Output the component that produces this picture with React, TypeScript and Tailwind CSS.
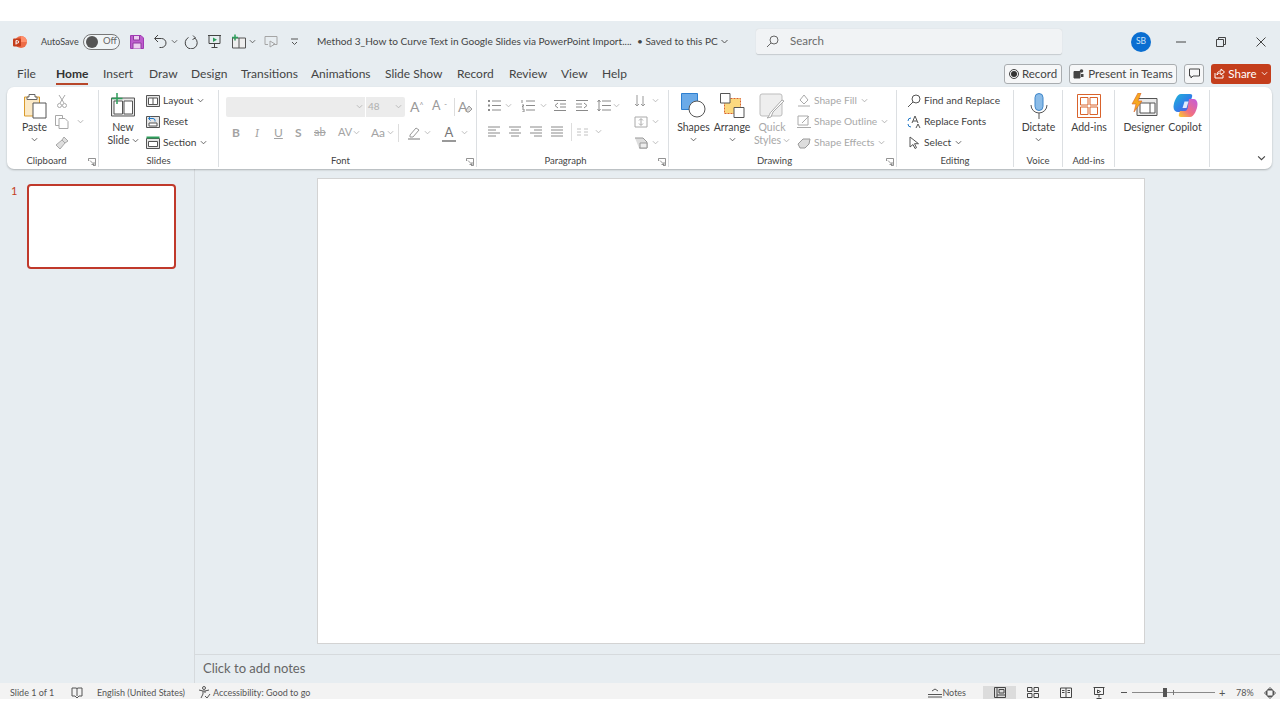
import type { ReactNode } from "react"

const FONT = "[font-family:Lato,'Noto_Sans',sans-serif]"

function Chev({ className = "", color = "#555" }: { className?: string; color?: string }) {
  return (
    <svg viewBox="0 0 8 5" className={`w-[7px] h-[5px] shrink-0 ${className}`} fill="none" stroke={color} strokeWidth="1">
      <path d="M1 1l3 3 3-3" />
    </svg>
  )
}

function Ico({ w = 16, h = 16, children, className = "" }: { w?: number; h?: number; children: ReactNode; className?: string }) {
  return (
    <svg width={w} height={h} viewBox={`0 0 ${w} ${h}`} fill="none" stroke="#555" strokeWidth="1" className={`shrink-0 ${className}`}>
      {children}
    </svg>
  )
}

const TABS = [
  { label: "File", w: "w-[39px]" },
  { label: "Home", w: "w-[47px]" },
  { label: "Insert", w: "w-[46px]" },
  { label: "Draw", w: "w-[42px]" },
  { label: "Design", w: "w-[50px]" },
  { label: "Transitions", w: "w-[70px]" },
  { label: "Animations", w: "w-[74px]" },
  { label: "Slide Show", w: "w-[72px]" },
  { label: "Record", w: "w-[52px]" },
  { label: "Review", w: "w-[52px]" },
  { label: "View", w: "w-[41px]" },
  { label: "Help", w: "w-[40px]" },
]

function Group({ label, className, contentClass = "", labelClass = "", launcher, children }: { label?: string; className: string; contentClass?: string; labelClass?: string; launcher?: boolean; children: ReactNode }) {
  return (
    <div className={`relative h-[77px] shrink-0 flex flex-col border-r border-[#dcdfe2] ${className}`}>
      <div className={`flex-1 min-h-0 flex ${contentClass}`}>{children}</div>
      <div className={`h-[12px] text-center text-[9.5px] leading-[12px] text-[#444] ${labelClass}`}>{label}</div>
      {launcher && (
        <svg viewBox="0 0 8 8" className="absolute right-[2px] bottom-[1px] w-[8px] h-[8px]" fill="none" stroke="#777" strokeWidth="0.8">
          <path d="M.5 3V.5H7.5V7.5H5M2 2.5l4 4M6 4v2.5H3.5" />
        </svg>
      )}
    </div>
  )
}

function SmallRow({ icon, label, chevron, muted }: { icon: ReactNode; label: string; chevron?: boolean; muted?: boolean }) {
  return (
    <div className={`h-[21px] flex items-center gap-[3px] text-[10.2px] whitespace-nowrap ${muted ? "text-[#a8a8a8]" : "text-[#3f3f3f]"}`}>
      <span className="w-[14px] h-[16px] flex items-center justify-center">{icon}</span>
      <span>{label}</span>
      {chevron && <Chev className="ml-[1px]" color={muted ? "#aaa" : "#555"} />}
    </div>
  )
}

function BigButton({ icon, lines, chevronBelow, width, muted }: { icon: ReactNode; lines: ReactNode; chevronBelow?: boolean; width: string; muted?: boolean }) {
  return (
    <div className={`${width} shrink-0 pt-[2px] flex flex-col items-center text-[10.5px] leading-[13px] ${muted ? "text-[#a8a8a8]" : "text-[#3f3f3f]"}`}>
      <div className="h-[27px] flex items-center justify-center">{icon}</div>
      <div className="mt-[2px] text-center whitespace-nowrap">{lines}</div>
      {chevronBelow && <Chev className="mt-[3px]" />}
    </div>
  )
}

function Lines({ kind }: { kind: "left" | "center" | "right" | "justify" }) {
  const rows: Record<string, string> = {
    left: "M1 2h12M1 5h8M1 8h12M1 11h8",
    center: "M1 2h12M3 5h8M1 8h12M3 11h8",
    right: "M1 2h12M5 5h8M1 8h12M5 11h8",
    justify: "M1 2h12M1 5h12M1 8h12M1 11h12",
  }
  return (
    <Ico w={14} h={13}>
      <path d={rows[kind]} stroke="#8a8a8a" />
    </Ico>
  )
}

function Copilot() {
  return (
    <svg width="25" height="25" viewBox="0 0 25 25">
      <defs>
        <linearGradient id="cpA" x1="0" y1="0" x2="1" y2="1">
          <stop offset="0" stopColor="#1fb6d8" />
          <stop offset="0.55" stopColor="#2f7fe8" />
          <stop offset="1" stopColor="#7a4fd8" />
        </linearGradient>
        <linearGradient id="cpB" x1="0" y1="1" x2="1" y2="0">
          <stop offset="0" stopColor="#f9d02c" />
          <stop offset="0.4" stopColor="#f2707f" />
          <stop offset="1" stopColor="#c25be0" />
        </linearGradient>
      </defs>
      <path d="M8 1h9c2 0 2.600 1 2 3l-4 12c-.8 2.200-1.800 3-4 3H5C2.600 19 .5 17.200 .5 14c0-5 3.500-13 7.500-13z" fill="url(#cpA)" />
      <path d="M16 6h4.500c2.400 0 4 2 4 5 0 5-3.500 13-7.500 13H8c-2 0-2.600-1-2-3l1-3h4c2 0 3-.8 3.600-2.600z" fill="url(#cpB)" />
      <path d="M11.500 8.500h4l-2 6.500h-4z" fill="#fff" opacity="0.85" />
    </svg>
  )
}

export default function App() {
  return (
    <div className={`h-[720px] w-[1280px] overflow-hidden bg-white pt-[21px] ${FONT}`}>
      <div className="h-[678px] bg-[#e7edf1] flex flex-col">
        {/* title bar */}
        <div className="h-[41px] shrink-0 flex items-center pl-[13px] text-[#444] text-[10.1px] whitespace-nowrap">
          <svg width="14" height="14" viewBox="0 0 14 14" className="shrink-0">
            <circle cx="8" cy="7" r="6" fill="#ed6c47" />
            <path d="M8 1a6 6 0 0 1 6 6H8z" fill="#ff8f6b" />
            <rect x="0" y="3.5" width="8" height="8" rx="1" fill="#c43e1c" />
            <path d="M3 5.500v4M3 5.700h1.500a1.200 1.200 0 0 1 0 2.400H3" stroke="#fff" strokeWidth="1" fill="none" />
          </svg>
          <span className="ml-[14px] w-[42px] text-[9px]">AutoSave</span>
          <div className="w-[37px] h-[16px] rounded-full border border-[#777] bg-white/40 flex items-center pl-[2px] gap-[5px]">
            <span className="w-[12px] h-[12px] rounded-full bg-[#555]" />
            <span className="text-[9.5px] text-[#666]">Off</span>
          </div>
          <Ico w={14} h={14} className="ml-[10px]">
            <path d="M.5.5h10.500l2.500 2.500v10.500H.5z" fill="#bd5ccd" stroke="#a03bb3" />
            <path d="M3.500 1v4h6V1M3 13.500V8h8v5.500" fill="#eccdf0" stroke="#8c3a9c" />
          </Ico>
          <Ico w={15} h={15} className="ml-[9px]">
            <path d="M5 1L1.500 4.500 5 8M2 4.500h6.500a4.500 4.500 0 0 1 0 9H6.500" stroke="#444" />
          </Ico>
          <Chev className="ml-[3px]" />
          <Ico w={15} h={15} className="ml-[6px]">
            <path d="M9 1.500l2.500 2.500-3 1.500M11 4.200a6 6 0 1 1-6.500-.7" stroke="#444" />
          </Ico>
          <Ico w={15} h={15} className="ml-[8px]">
            <path d="M1 1.500h13M2 1.500v8h11v-8M7.500 9.500V13M4.500 13.500h6" stroke="#444" />
            <path d="M6 3.500l4 2.200L6 8z" fill="#2e9e5b" stroke="none" />
          </Ico>
          <Ico w={16} h={15} className="ml-[9px]">
            <path d="M1.500 4h13v10h-13zM8 4v10" stroke="#555" fill="#eee" />
            <path d="M4 .5v6M1 3.500h6" stroke="#2e9e5b" strokeWidth="1.500" />
          </Ico>
          <Chev className="ml-[2px]" />
          <Ico w={14} h={14} className="ml-[8px]">
            <path d="M1 1.500h12v8H9M1 1.500v8h3M6 6l5 3-5 3z" stroke="#a5a5a5" />
          </Ico>
          <svg width="9" height="8" viewBox="0 0 9 8" className="ml-[12px] shrink-0" fill="none" stroke="#555">
            <path d="M1 1h7M2 4l2.500 2.500L7 4" />
          </svg>
          <span className="ml-[18px] w-[320px]">Method 3_How to Curve Text in Google Slides via PowerPoint Import....</span>
          <span className="w-[83px]">• Saved to this PC</span>
          <Chev className="w-[9px]" />
          <div className="ml-[27px] w-[306px] h-[26px] rounded-[3px] bg-[#f1f3f5] border-b border-[#c9ced2] shadow-[0_0_1px_#c5c9cc] flex items-center pl-[10px] gap-[11px] text-[#6b6b6b] text-[11.5px]">
            <Ico w={13} h={13}>
              <circle cx="8" cy="5" r="4" stroke="#666" />
              <path d="M5 8l-4 4" stroke="#666" />
            </Ico>
            <span>Search</span>
          </div>
          <div className="ml-[69px] w-[20px] h-[20px] rounded-full bg-[#0a6ed1] text-[#cfe4f7] text-[8.5px] flex items-center justify-center">SB</div>
          <Ico w={10} h={10} className="ml-[25px]">
            <path d="M0 5h10" stroke="#444" />
          </Ico>
          <Ico w={10} h={10} className="ml-[30px]">
            <path d="M.5 2.500h7v7h-7zM2.500 2.500V.5h7v7H7.500" stroke="#444" />
          </Ico>
          <Ico w={10} h={10} className="ml-[30px]">
            <path d="M.5.5l9 9M9.500.5l-9 9" stroke="#444" />
          </Ico>
        </div>

        {/* tabs */}
        <div className="h-[25px] shrink-0 flex items-center pl-[17px] pr-[9px] pb-[2px] text-[12px] text-[#444]">
          {TABS.map((t) => (
            <div key={t.label} className={`${t.w} h-full flex items-center`}>
              {t.label === "Home" ? (
                <span className="relative font-bold text-[#333]">
                  {t.label}
                  <span className="absolute left-0 right-0 -bottom-[2px] h-[2px] bg-[#b7472a]" />
                </span>
              ) : (
                t.label
              )}
            </div>
          ))}
          <div className="ml-auto flex items-center gap-[7px] text-[11.5px]">
            <div className="h-[20px] w-[58px] rounded-[3px] border border-[#a9adb0] bg-[#f6f7f8] flex items-center justify-center gap-[3px]">
              <span className="w-[10px] h-[10px] rounded-full border border-[#444] flex items-center justify-center">
                <span className="w-[6px] h-[6px] rounded-full bg-[#333]" />
              </span>
              Record
            </div>
            <div className="h-[20px] w-[108px] rounded-[3px] border border-[#a9adb0] bg-[#f6f7f8] flex items-center justify-center gap-[4px] whitespace-nowrap">
              <Ico w={11} h={11}>
                <path d="M1 3.500h6v6.500H1z" fill="#444" stroke="#444" />
                <circle cx="8.5" cy="3" r="1.8" fill="#444" stroke="none" />
                <path d="M8 6h2.500v3H8z" fill="#444" stroke="none" />
              </Ico>
              Present in Teams
            </div>
            <div className="h-[20px] w-[20px] rounded-[3px] border border-[#a9adb0] bg-[#f6f7f8] flex items-center justify-center">
              <Ico w={11} h={11}>
                <path d="M.5 1h10v7H4L2 10V8H.5z" stroke="#444" />
              </Ico>
            </div>
            <div className="h-[20px] w-[60px] rounded-[3px] bg-[#c43e1c] text-white flex items-center justify-center gap-[3px]">
              <Ico w={11} h={11}>
                <path d="M1 5v5h8V7M3 7c0-3 2-4 4-4V1l3.500 3L7 7V5C5 5 4 5.500 3 7z" stroke="#fff" />
              </Ico>
              Share
              <Chev color="#fff" className="ml-[1px]" />
            </div>
          </div>
        </div>

        {/* ribbon */}
        <div className="h-[82px] mr-[8px] ml-[7px] shrink-0 rounded-[7px] bg-white shadow-[0_1px_2px_rgba(0,0,0,0.25)] flex pt-[3px] relative">
          <Group label="Clipboard" launcher className="w-[92px]" contentClass="pl-[13px]" labelClass="pr-[12px]">
            <BigButton
              width="w-[29px]"
              chevronBelow
              lines="Paste"
              icon={
                <Ico w={24} h={26}>
                  <path d="M1.500 4h15v19h-15z" fill="#fbe9c6" stroke="#d99a2b" />
                  <path d="M6 4V1.500h6V4h2v2.500H4V4z" fill="#fff" stroke="#666" />
                  <path d="M10 10h13v15H10z" fill="#fff" stroke="#555" />
                </Ico>
              }
            />
            <div className="ml-[4px] flex flex-col">
              <div className="h-[21px] flex items-center pl-[4px]">
                <Ico w={10} h={14}>
                  <path d="M2 1l5 8M8 1L3 9" stroke="#a8a8a8" />
                  <circle cx="2.5" cy="11.500" r="2" stroke="#a8a8a8" />
                  <circle cx="7.5" cy="11.500" r="2" stroke="#a8a8a8" />
                </Ico>
              </div>
              <div className="h-[21px] flex items-center gap-[8px] pl-[2px]">
                <Ico w={14} h={14}>
                  <path d="M.5.5h7v10h-7z" stroke="#a8a8a8" />
                  <path d="M4 3.500h6l3 3v7H4z" fill="#fff" stroke="#a8a8a8" />
                </Ico>
                <Chev color="#aaa" />
              </div>
              <div className="h-[21px] flex items-center pl-[2px]">
                <Ico w={14} h={14}>
                  <path d="M9 1l4 4-3 2-3-3zM7 4L1 9l4 4 5-6" stroke="#a8a8a8" fill="#dedede" />
                </Ico>
              </div>
            </div>
          </Group>

          <Group label="Slides" className="w-[120px]" contentClass="pl-[8px]">
            <BigButton
              width="w-[32px]"
              lines={
                <>
                  New
                  <br />
                  <span className="inline-flex items-center gap-[2px]">
                    Slide <Chev />
                  </span>
                </>
              }
              icon={
                <Ico w={26} h={25}>
                  <path d="M1.500 5h23v18h-23z" fill="#e9e9e9" stroke="#555" />
                  <path d="M4 8h8.500v13H4zM14 8h8.500v13H14z" fill="#fff" stroke="#555" />
                  <path d="M7 0v11M1.500 5.500h11" stroke="#2e9e5b" strokeWidth="1.500" />
                </Ico>
              }
            />
            <div className="ml-[7px] flex flex-col">
              <SmallRow
                chevron
                label="Layout"
                icon={
                  <Ico w={14} h={12}>
                    <path d="M.5.5h13v11H.5z" fill="#e6e6e6" stroke="#555" />
                    <path d="M2.500 3h9v6.500h-9zM7 3v6.500" fill="#fff" stroke="#555" />
                  </Ico>
                }
              />
              <SmallRow
                label="Reset"
                icon={
                  <Ico w={14} h={13}>
                    <path d="M.5 1.500h13v11H.5z" fill="#e6e6e6" stroke="#555" />
                    <path d="M3 8h8v3H3z" fill="#fff" stroke="#555" />
                    <path d="M3 3.500h4a2 2 0 0 1 2 2v1M4.500 1.500l-2 2 2 2" stroke="#1f78c8" />
                  </Ico>
                }
              />
              <SmallRow
                chevron
                label="Section"
                icon={
                  <Ico w={14} h={13}>
                    <path d="M.5 2.500h13v10H.5z" fill="#e6e6e6" stroke="#555" />
                    <path d="M2.500 5.500h9v5h-9z" fill="#fff" stroke="#555" />
                    <path d="M.5 1.500h13" stroke="#2e9e5b" strokeWidth="2" />
                  </Ico>
                }
              />
            </div>
          </Group>

          <Group label="Font" launcher className="w-[258px]" contentClass="pl-[7px]" labelClass="pr-[14px]">
            <div className="flex flex-col">
              <div className="h-[21px] mt-[6px] flex items-center">
                <div className="w-[139px] h-[20px] rounded-l-[2px] bg-[#ececec] flex items-center justify-end pr-[2px]">
                  <Chev color="#b5b5b5" />
                </div>
                <div className="ml-[1px] w-[39px] h-[20px] rounded-r-[2px] bg-[#ececec] flex items-center pl-[2px] text-[10px] text-[#b0b0b0]">
                  48
                  <Chev className="ml-auto mr-[3px]" color="#b5b5b5" />
                </div>
                <span className="ml-[5px] w-[22px] text-[14px] leading-none text-[#999]">
                  A<sup className="text-[7px]">^</sup>
                </span>
                <span className="w-[12px] text-[12.5px] leading-none text-[#999]">A</span>
                <span className="w-[10px] text-[8px] text-[#999]">ˇ</span>
                <span className="w-[1px] h-[18px] bg-[#ddd]" />
                <span className="ml-[3px] text-[14px] leading-none text-[#999]">A</span>
                <Ico w={8} h={8} className="-ml-[2px] mt-[4px]">
                  <path d="M1 5l3-4 3 3-3 3H2z" fill="#ddd" stroke="#999" />
                </Ico>
              </div>
              <div className="h-[23px] mt-[4px] flex items-center text-[12px] text-[#a3a3a3]">
                <span className="ml-[6px] w-[21px] font-bold">B</span>
                <span className="w-[21px] pl-[2px] italic font-serif">I</span>
                <span className="w-[21px] underline">U</span>
                <span className="w-[19px] font-bold">S</span>
                <span className="w-[24px] line-through text-[11px]">ab</span>
                <span className="w-[15px] text-[11px]">AV</span>
                <Chev className="mr-[11px]" color="#b5b5b5" />
                <span className="w-[16px] text-[12px]">Aa</span>
                <Chev className="mr-[4px]" color="#b5b5b5" />
                <span className="w-[1px] h-[18px] bg-[#ddd] mr-[8px]" />
                <Ico w={14} h={14}>
                  <path d="M3 9l6-7 3 2-6 7H3z" stroke="#999" />
                  <path d="M1 13h12" stroke="#bbb" strokeWidth="2" />
                </Ico>
                <Chev className="ml-[3px] mr-[11px]" color="#b5b5b5" />
                <span className="relative w-[14px] text-center text-[13px] leading-none text-[#777]">
                  A
                  <span className="absolute left-0 right-0 -bottom-[3px] h-[2px] bg-[#999]" />
                </span>
                <Chev className="ml-[5px]" color="#b5b5b5" />
              </div>
            </div>
          </Group>

          <Group label="Paragraph" launcher className="w-[192px]" contentClass="pl-[10px]" labelClass="pr-[14px]">
            <div className="w-[147px] flex flex-col">
              <div className="h-[21px] mt-[5px] flex items-center">
                <Ico w={14} h={13}>
                  <path d="M5 2h9M5 6.500h9M5 11h9" stroke="#8a8a8a" />
                  <path d="M1 2h2M1 6.500h2M1 11h2" stroke="#8a8a8a" strokeWidth="2" />
                </Ico>
                <Chev className="ml-[4px] mr-[9px]" color="#b5b5b5" />
                <Ico w={14} h={13}>
                  <path d="M5 2h9M5 6.500h9M5 11h9M1 1v3M1 6h2l-2 2h2M1 10h2v3H1" stroke="#8a8a8a" />
                </Ico>
                <Chev className="ml-[5px] mr-[6px]" color="#b5b5b5" />
                <Ico w={14} h={13} className="mr-[8px]">
                  <path d="M1 1.500h12M7 5h6M7 8h6M1 11.500h12M5 4L2 6.500 5 9" stroke="#8a8a8a" />
                </Ico>
                <Ico w={14} h={13} className="mr-[8px]">
                  <path d="M1 1.500h12M1 5h6M1 8h6M1 11.500h12M9 4l3 2.500L9 9" stroke="#8a8a8a" />
                </Ico>
                <Ico w={14} h={13}>
                  <path d="M5 2h9M5 6.500h9M5 11h9M2 1v11M.5 3L2 1l1.500 2M.5 10L2 12l1.500-2" stroke="#8a8a8a" />
                </Ico>
                <Chev className="ml-[2px]" color="#b5b5b5" />
              </div>
              <div className="h-[23px] mt-[4px] flex items-center gap-[7px]">
                <Lines kind="left" />
                <Lines kind="center" />
                <Lines kind="right" />
                <Lines kind="justify" />
                <span className="w-[1px] h-[18px] bg-[#ddd]" />
                <Ico w={13} h={10} className="-ml-[3px]">
                  <path d="M1 2h4M8 2h4M1 5h4M8 5h4M1 8h4M8 8h4" stroke="#c2c2c2" />
                </Ico>
                <Chev className="-ml-[1px]" color="#b5b5b5" />
              </div>
            </div>
            <div className="flex flex-col">
              <div className="h-[21px] flex items-center gap-[4px]">
                <Ico w={14} h={14}>
                  <path d="M3 1v11M1 10l2 2 2-2M7 10l2 2 2-2M9 2v10" stroke="#999" />
                </Ico>
                <Chev color="#b5b5b5" />
              </div>
              <div className="h-[21px] flex items-center gap-[4px]">
                <Ico w={14} h={14}>
                  <path d="M1 2h12v10H1zM7 4v6M5 5.500l2-2 2 2M5 8.500l2 2 2-2" stroke="#aaa" />
                </Ico>
                <Chev color="#b5b5b5" />
              </div>
              <div className="h-[21px] flex items-center gap-[4px]">
                <Ico w={14} h={14}>
                  <path d="M1 2h8l4 4v6H5" fill="#ddd" stroke="#999" />
                  <path d="M6 7h7v5H6z" fill="#eee" stroke="#999" />
                </Ico>
                <Chev color="#b5b5b5" />
              </div>
            </div>
          </Group>

          <Group label="Drawing" launcher className="w-[228px]" contentClass="pl-[6px]" labelClass="pr-[16px]">
            <BigButton
              width="w-[37px]"
              chevronBelow
              lines="Shapes"
              icon={
                <Ico w={26} h={25}>
                  <path d="M.5.5h16v16h-16z" fill="#6aaae8" stroke="#2d7fd0" />
                  <circle cx="16" cy="16" r="8" fill="#fff" stroke="#555" />
                </Ico>
              }
            />
            <BigButton
              width="w-[40px]"
              chevronBelow
              lines="Arrange"
              icon={
                <Ico w={25} h={25}>
                  <path d="M4.500 5.500h16v15h-16z" fill="#fbd97f" stroke="#d9622b" strokeDasharray="2 1" />
                  <path d="M.5.5h9.500v9.500H.5zM14 14.500h10v10H14z" fill="#fff" stroke="#555" />
                </Ico>
              }
            />
            <BigButton
              width="w-[40px]"
              muted
              lines={
                <>
                  Quick
                  <br />
                  <span className="inline-flex items-center gap-[2px]">
                    Styles <Chev color="#aaa" />
                  </span>
                </>
              }
              icon={
                <Ico w={26} h={26}>
                  <rect x="1" y="1" width="22" height="22" rx="2" fill="#eee" stroke="#bdbdbd" />
                  <path d="M25 8L14 19l-2 5-4 1c3-2 2-5 5-7L23 7z" fill="#fff" stroke="#aaa" />
                </Ico>
              }
            />
            <div className="ml-[5px] flex flex-col">
              <SmallRow
                muted
                chevron
                label="Shape Fill"
                icon={
                  <Ico w={14} h={14}>
                    <path d="M7 1l4 5-4 4-4-4zM1 12h12" stroke="#aaa" />
                  </Ico>
                }
              />
              <SmallRow
                muted
                chevron
                label="Shape Outline"
                icon={
                  <Ico w={14} h={14}>
                    <path d="M1 1h10v9H1zM5 8l7-7M0 12.500h14" stroke="#aaa" />
                  </Ico>
                }
              />
              <SmallRow
                muted
                chevron
                label="Shape Effects"
                icon={
                  <Ico w={14} h={14}>
                    <path d="M1 8l5-5h7l-1 5-4 4H3z" fill="#ddd" stroke="#999" />
                  </Ico>
                }
              />
            </div>
          </Group>

          <Group label="Editing" className="w-[117px]" contentClass="pl-[10px]">
            <div className="flex flex-col">
              <SmallRow
                label="Find and Replace"
                icon={
                  <Ico w={14} h={14}>
                    <circle cx="9" cy="5" r="4" stroke="#555" />
                    <path d="M6 8l-5 5" stroke="#555" />
                  </Ico>
                }
              />
              <SmallRow
                label="Replace Fonts"
                icon={
                  <Ico w={14} h={14}>
                    <path d="M5 8l3-7 3 7M6 6h4M9 13l2-4 2 4" stroke="#555" />
                    <path d="M1 6a3 3 0 0 1 3-3M4 12a3 3 0 0 1-3-3" stroke="#1f78c8" />
                  </Ico>
                }
              />
              <SmallRow
                chevron
                label="Select"
                icon={
                  <Ico w={12} h={14}>
                    <path d="M2 1v10l3-2.500 2 4 1.500-.8-2-4h4z" stroke="#555" fill="#fff" />
                  </Ico>
                }
              />
            </div>
          </Group>

          <Group label="Voice" className="w-[49px]" contentClass="pl-[1px]">
            <BigButton
              width="w-full"
              chevronBelow
              lines="Dictate"
              icon={
                <Ico w={18} h={26}>
                  <rect x="5" y="0.5" width="8" height="17" rx="4" fill="#8bbce8" stroke="#3f86c9" />
                  <path d="M1 12a8 8 0 0 0 16 0M9 20v6" stroke="#555" />
                </Ico>
              }
            />
          </Group>

          <Group label="Add-ins" className="w-[52px]" contentClass="pl-[1px]">
            <BigButton
              width="w-full"
              lines="Add-ins"
              icon={
                <Ico w={24} h={24}>
                  <path d="M.5.5h23v23H.5z" stroke="#d9622b" />
                  <path d="M3.500 3.500h7.500v7.500H3.500zM13 3.500h7.500v7.500H13zM3.500 13H11v7.500H3.500zM13 13h7.500v7.500H13z" stroke="#d9622b" />
                </Ico>
              }
            />
          </Group>

          <Group className="w-[95px]" contentClass="pl-[8px]">
            <BigButton
              width="w-[42px]"
              lines="Designer"
              icon={
                <Ico w={27} h={25}>
                  <path d="M6 5.500h20v17H6z" fill="#e9e9e9" stroke="#555" />
                  <path d="M9 10h15v10H9zM19 10v10" fill="#fff" stroke="#555" />
                  <path d="M7 0L1 11h4l-2 8 8-11H7l3-8z" fill="#f6a821" stroke="#d9622b" strokeWidth="0.6" />
                </Ico>
              }
            />
            <BigButton width="w-[40px]" lines="Copilot" icon={<Copilot />} />
          </Group>

          <Chev className="absolute right-[6px] bottom-[8px] w-[9px] h-[6px]" color="#444" />
        </div>

        {/* main */}
        <div className="flex-1 min-h-0 flex">
          <div className="w-[195px] shrink-0 border-r border-[#d6dadd] flex pl-[11px] pt-[15px]">
            <span className="w-[16px] text-[11px] leading-[14px] text-[#c43e1c]">1</span>
            <div className="w-[149px] h-[85px] rounded-[4px] border-2 border-[#c0392b] bg-white" />
          </div>
          <div className="flex-1 flex flex-col min-w-0">
            <div className="h-[486px] border-b border-[#d6dadd] flex items-start justify-center pt-[9px] pr-[13px]">
              <div className="w-[828px] h-[466px] bg-white border border-[#d3d3d3]" />
            </div>
            <div className="flex-1 flex items-center pl-[8px] text-[13px] text-[#666]">Click to add notes</div>
          </div>
        </div>

        {/* status bar */}
        <div className="h-[16px] shrink-0 bg-[#f3f3f3] flex items-center pl-[10px] pt-[3px] text-[9px] text-[#555] whitespace-nowrap">
          <span className="w-[61px]">Slide 1 of 1</span>
          <Ico w={12} h={12}>
            <path d="M1 1h4.500l.5 1 .5-1H11v8H8l-2 2-2-2H1zM6 2v7" stroke="#555" />
          </Ico>
          <span className="ml-[14px] w-[101px]">English (United States)</span>
          <Ico w={13} h={13}>
            <circle cx="6" cy="2" r="1.5" stroke="#555" />
            <path d="M1 4l4 1h2l4-1M5 5v3l-2 4M7 5v2M7 10l2 2 3-4" stroke="#555" />
          </Ico>
          <span className="ml-[2px]">Accessibility: Good to go</span>
          <div className="ml-auto flex items-center h-full">
            <Ico w={14} h={10}>
              <path d="M0 6.500h14M0 9h14M4 3l3-2 3 2" stroke="#555" />
            </Ico>
            <span className="mr-[17px]">Notes</span>
            <div className="w-[33px] h-full bg-[#dcdcdc] flex items-center justify-center">
              <Ico w={12} h={11}>
                <path d="M.5.5h11v10H.5zM3 .5v10M3 8h8.500M5 2.500h5v3.500H5z" stroke="#444" />
              </Ico>
            </div>
            <Ico w={12} h={11} className="ml-[11px]">
              <path d="M.5.5h4.500v4H.5zM7 .5h4.500v4H7zM.5 6.500h4.500v4H.5zM7 6.500h4.500v4H7z" stroke="#444" />
            </Ico>
            <Ico w={12} h={11} className="ml-[21px]">
              <path d="M.5 1h11v9.500H.5zM6 1v9.500M2 3.500h2.500M2 5.500h2.500M7.500 3.500H10M7.500 5.500H10" stroke="#444" />
            </Ico>
            <Ico w={12} h={12} className="ml-[21px]">
              <path d="M.5.5h11M1.500.5v7h9v-7M6 7.500v3M3.500 11.500h5M4.500 3l3 1.500-3 1.500z" stroke="#444" />
            </Ico>
            <span className="ml-[16px] w-[6px] h-[1px] bg-[#555]" />
            <div className="ml-[5px] w-[83px] h-[1px] bg-[#8a8a8a] relative">
              <span className="absolute left-[31px] -top-[4px] w-[4px] h-[9px] bg-[#555]" />
              <span className="absolute left-[41px] -top-[2px] w-[1px] h-[5px] bg-[#777]" />
            </div>
            <span className="ml-[4px] text-[11px] leading-none w-[8px]">+</span>
            <span className="ml-[9px] w-[18px]">78%</span>
            <Ico w={12} h={12} className="ml-[10px] mr-[4px]">
              <path d="M6 .5L8 2.500H4zM6 11.500L8 9.500H4zM.5 6L2.500 4v4zM11.500 6L9.500 4v4zM3 3h6v6H3z" stroke="#555" />
            </Ico>
          </div>
        </div>
      </div>
    </div>
  )
}
